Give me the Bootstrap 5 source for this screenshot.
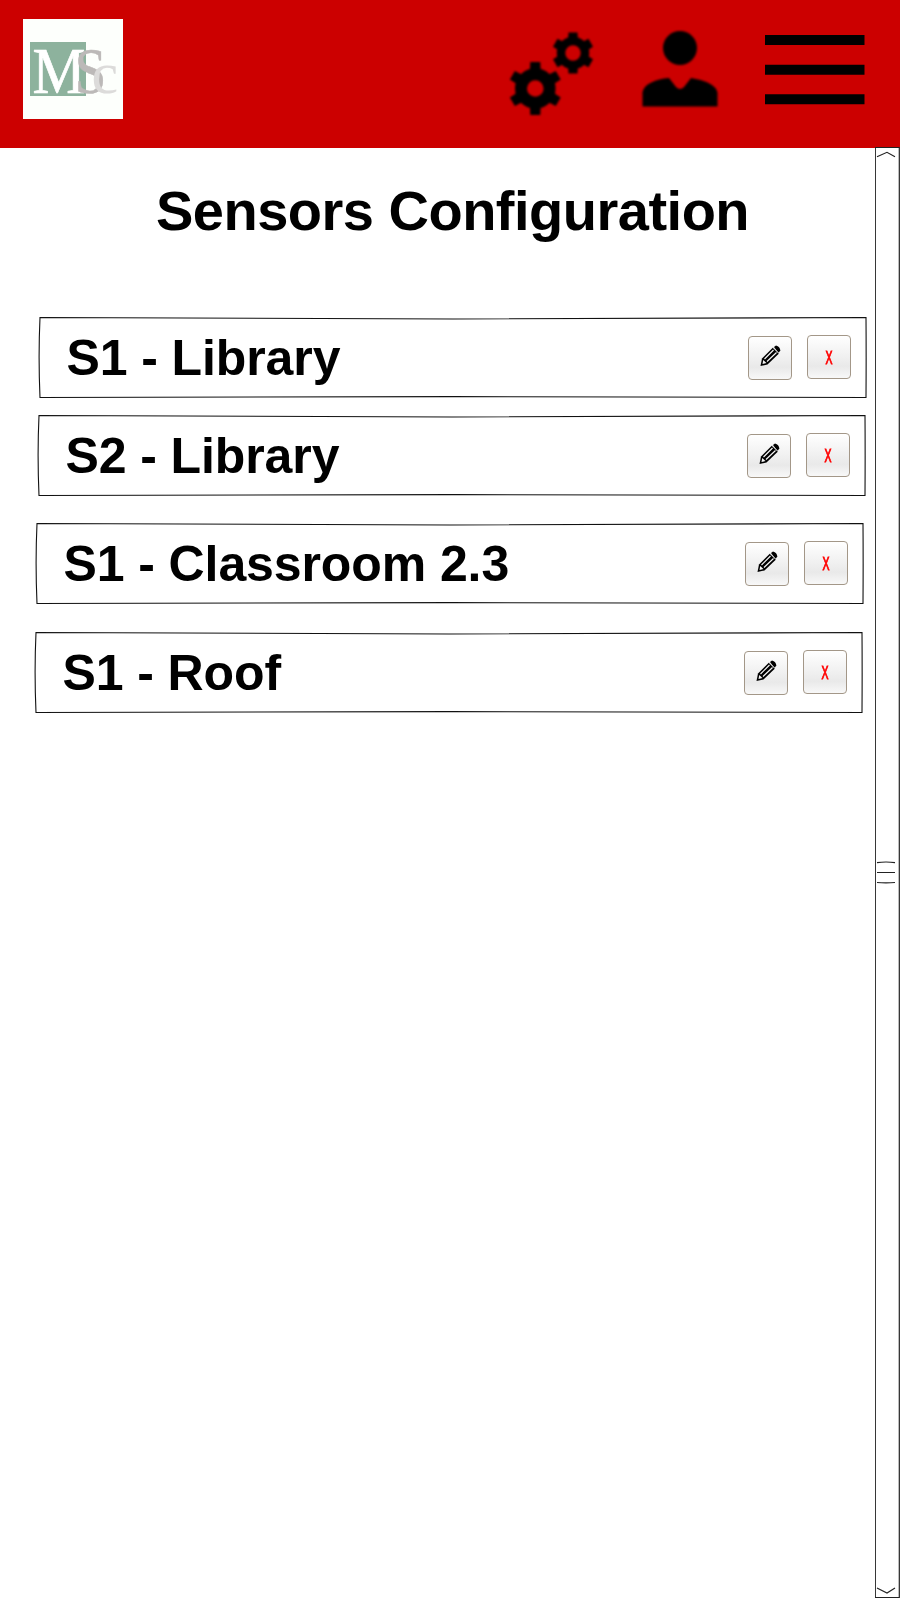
<!DOCTYPE html>
<html lang="en">
<head>
<meta charset="utf-8">
<meta name="viewport" content="width=device-width, initial-scale=1">
<title>Sensors Configuration</title>
<link href="https://cdn.jsdelivr.net/npm/bootstrap@5.3.0/dist/css/bootstrap.min.css" rel="stylesheet">
<style>
  body { font-family: "Liberation Sans", Arial, sans-serif; color: #000; background: #fff; }
  .screen { width: 900px; height: 1600px; overflow: hidden; }
  .topbar { height: 148px; background: #c00; padding: 19px 35px 0 23px; }
  .topbar svg { display: block; overflow: visible; }
  .soft { filter: blur(.8px); }
  .softer { filter: blur(1.1px); margin-top: 9px; }
  .main-col { width: 875px; }
  .page-title { font-size: 56px; letter-spacing: -.5px; line-height: 64px; font-weight: 700; margin: 31px 0 0 30px; width: 845px; text-align: center; white-space: nowrap; }
  .sensor { width: 828px; height: 81px; padding: 0 16px 0 27.500px; }
  .sensor.s1 { margin: 74px 0 0 39px; }
  .sensor.s2 { margin: 17px 0 0 38px; }
  .sensor.s3 { margin: 27px 0 0 36px; }
  .sensor.s4 { margin: 28px 0 0 35px; }
  .frame { inset: 0; overflow: visible; }
  .sensor-name { font-size: 50px; letter-spacing: -.1px; line-height: 56px; font-weight: 700; white-space: nowrap; }
  .tool { width: 44px; height: 44px; padding: 0; border: 1px solid #a39788; border-radius: 4px; color: #f00;
    background: linear-gradient(#fff, #f0f0f0 50%, #e9e9e9 72%, #f8f8f8); font: 18px/1 "Liberation Sans", sans-serif; }
  .tool.edit { margin-right: 15px; margin-bottom: 0; }
  .tool.remove { margin-bottom: 2px; }
  .tool.remove span { transform: scaleX(.58); -webkit-text-stroke: 1px #f00; padding-top: 2px; }
  .scroller { width: 25px; margin-top: -1px; height: 1453px; }
</style>
</head>
<body>
<div class="screen">
  <header class="topbar d-flex align-items-start">
    <svg class="me-auto" width="100" height="100" viewBox="0 0 100 100" font-family="Liberation Serif, serif">
      <rect width="100" height="100" fill="#fdfffc"/>
      <rect x="7" y="23" width="56" height="54" fill="#8db29d"/>
      <text x="9.5" y="74" font-size="66" textLength="53" lengthAdjust="spacingAndGlyphs" fill="#fff" stroke="#fff" stroke-width=".7">M</text>
      <text x="51.500" y="74" font-size="66" textLength="32" lengthAdjust="spacingAndGlyphs" fill="#bcb9b8" stroke="#bcb9b8" stroke-width=".4">S</text>
      <text x="68.500" y="74" font-size="60" fill="#dcdbda">c</text>
    </svg>
    <svg class="softer" width="86" height="86" viewBox="508 28 86 86">
      <defs>
        <path id="teeth-big" d="M-5.500,-16 L-5,-26.500 H5 L5.500,-16 Z M-5.500,16 L-5,26.500 H5 L5.500,16 Z"/>
        <path id="teeth-small" d="M-5,-12 L-4.500,-20.500 H4.500 L5,-12 Z M-5,12 L-4.500,20.500 H4.500 L5,12 Z"/>
      </defs>
      <g transform="translate(535.3 88.5)">
        <circle r="14.300" fill="none" stroke="#000" stroke-width="12"/>
        <use href="#teeth-big"/><use href="#teeth-big" transform="rotate(60)"/><use href="#teeth-big" transform="rotate(120)"/>
      </g>
      <g transform="translate(573 53)">
        <circle r="12" fill="none" stroke="#000" stroke-width="8.500"/>
        <use href="#teeth-small"/><use href="#teeth-small" transform="rotate(60)"/><use href="#teeth-small" transform="rotate(120)"/>
      </g>
    </svg>
    <svg class="soft" style="margin-left:48px" width="76" height="90" viewBox="642 19 76 90">
      <circle cx="680" cy="48" r="17"/>
      <path d="M642.500 106.500 V92 C644 84 656 79 669 78 L676 87 Q680 91 684 87 L691 78 C704 80 717 85 717.500 93 V106.500 Z"/>
    </svg>
    <svg style="margin-left:47px;filter:blur(.4px)" width="100" height="90" viewBox="0 0 100 90">
      <path d="M0 16h99.500v10H0z M0 45.700h99.500v10H0z M0 75.300h99.500v10H0z"/>
    </svg>
  </header>
  <div class="d-flex">
    <main class="main-col">
      <h1 class="page-title">Sensors Configuration</h1>
      <div id="list"></div>
    </main>
    <svg class="scroller position-relative" viewBox="875 147 25 1453" fill="none" stroke="#222" stroke-width="1.200">
      <path fill="#fff" d="M875.300 147.300 H899.300 Q900 872 899.300 1597.500 H875.300 Q876.500 872 875.300 147.300 Z"/>
      <path d="M877 156.700 L887 152.300 L895 156.700 M877 1588 L887 1593 L895 1588"/>
      <path d="M877 862.700 Q886 861.300 895 862.700 M877 872.500 H895 M877 882.500 Q886 883.300 895 882.500"/>
    </svg>
  </div>
</div>
<script src="https://cdn.jsdelivr.net/npm/bootstrap@5.3.0/dist/js/bootstrap.bundle.min.js"></script>
<script>
  const names = ['S1 - Library', 'S2 - Library', 'S1 - Classroom 2.3', 'S1 - Roof'];
  document.getElementById('list').innerHTML = names.map((name, i) => `
    <div class="sensor s${i + 1} position-relative d-flex align-items-center">
      <svg class="frame position-absolute" width="828" height="81" fill="none" stroke="#111" stroke-width="1.100">
        <path d="M1 .5 C250 2.500 578 2.500 827 .5 Q827.300 40 827 80.500 C578 79.300 250 79.300 1 80.500 Q-.8 40 1 .5 Z"/>
      </svg>
      <span class="sensor-name me-auto position-relative">${name}</span>
      <button class="tool edit btn position-relative d-flex align-items-center justify-content-center" aria-label="Edit">
        <svg width="42" height="42" viewBox="0 0 42 42">
          <path d="M11.500 29 L13 21.500 L24 10.500 L30 16.500 L18.500 27.500 Z"/>
          <path d="M25 10 L27 8.500 Q31 9.500 31.300 13.500 L29.500 16 Z"/>
          <path d="M15.500 22 L24.500 13 M18 24.500 L27.500 15.500" stroke="#f4f4f4" stroke-width="1.200" fill="none"/>
          <path d="M23.700 10.200 L30.200 16.700" stroke="#f4f4f4" stroke-width="1"/>
          <path d="M13.500 27 L14.200 23 L17.500 26 Z" fill="#f4f4f4"/>
        </svg>
      </button>
      <button class="tool remove btn position-relative d-flex align-items-center justify-content-center" aria-label="Remove"><span>X</span></button>
    </div>`).join('');
</script>
</body>
</html>
